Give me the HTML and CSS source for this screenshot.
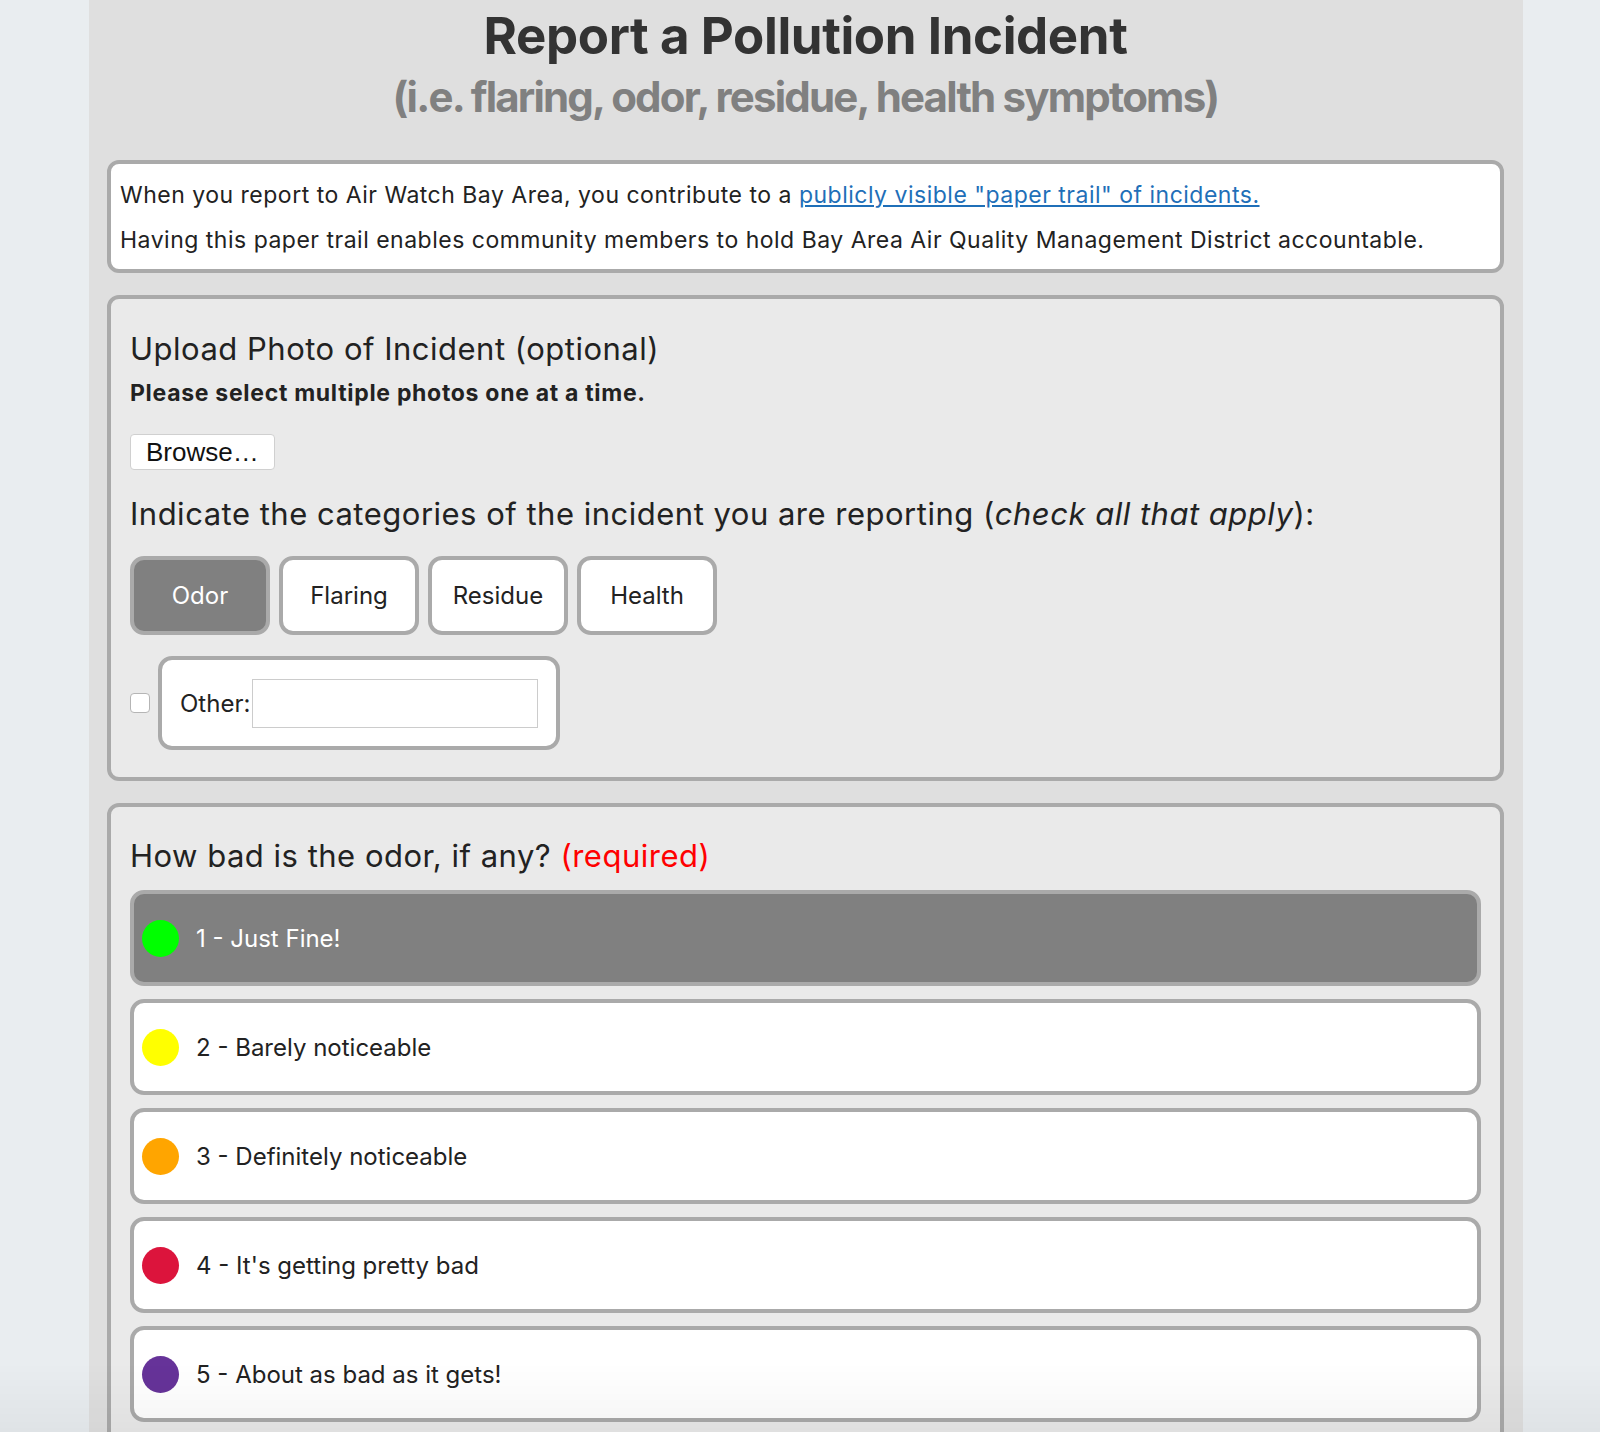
FILE: index.html
```html
<!DOCTYPE html>
<html lang="en">
<head>
    <meta charset="UTF-8">
    <meta name="viewport" content="width=device-width, initial-scale=1.0">
    <title>Report a Pollution Incident</title>
    <link rel="stylesheet" href="styles.css">
</head>
<body>
    <div id="report-page">
        <div class="page-header">
            <h1 class="page-title">Report a Pollution Incident</h1>
            <div class="page-subtitle">(i.e. flaring, odor, residue, health symptoms)</div>
        </div>

        <div class="info-box">
            <p>When you report to Air Watch Bay Area, you contribute to a <a href="#">publicly visible "paper trail" of incidents.</a></p>
            <p>Having this paper trail enables community members to hold Bay Area Air Quality Management District accountable.</p>
        </div>

        <div class="form-section">
            <h2 class="section-title">Upload Photo of Incident (optional)</h2>
            <div class="section-note">Please select multiple photos one at a time.</div>
            <button class="browse-btn">Browse…</button>

            <h2 class="section-title categories-title">Indicate the categories of the incident you are reporting (<em>check all that apply</em>):</h2>
            <div class="category-list">
                <button class="category-btn selected">Odor</button>
                <button class="category-btn">Flaring</button>
                <button class="category-btn">Residue</button>
                <button class="category-btn">Health</button>
            </div>
            <div class="other-row">
                <span class="checkbox"></span>
                <div class="other-box">
                    <label for="other-input">Other:</label>
                    <input type="text" id="other-input">
                </div>
            </div>
        </div>

        <div class="form-section odor-section">
            <h2 class="section-title">How bad is the odor, if any? <span class="required">(required)</span></h2>
            <div class="odor-list">
                <div class="odor-option selected"><span class="dot dot-1"></span>1 - Just Fine!</div>
                <div class="odor-option"><span class="dot dot-2"></span>2 - Barely noticeable</div>
                <div class="odor-option"><span class="dot dot-3"></span>3 - Definitely noticeable</div>
                <div class="odor-option"><span class="dot dot-4"></span>4 - It's getting pretty bad</div>
                <div class="odor-option"><span class="dot dot-5"></span>5 - About as bad as it gets!</div>
            </div>
        </div>
    </div>
    <div class="bottom-fade"></div>
</body>
</html>
```

FILE: styles.css
```css
body {
    margin: 0;
    padding: 0;
    background: #e9edf0;
    font-family: Inter, Roboto, sans-serif;
    color: #222;
    height: 1432px;
    overflow: hidden;
}

#report-page {
    width: 1434px;
    margin-left: 89px;
    min-height: 1432px;
    box-sizing: border-box;
    padding: 0 19px 0 18px;
    background: #dfdfdf;
}

.page-header {
    text-align: center;
    padding-top: 6px;
    margin-bottom: 38px;
}

.page-title {
    margin: 0;
    font-size: 51px;
    line-height: 60px;
    font-weight: bold;
    letter-spacing: -0.4px;
    color: #333;
}

.page-subtitle {
    margin-top: 6px;
    font-size: 42px;
    line-height: 50px;
    font-weight: bold;
    letter-spacing: -1.8px;
    color: #808080;
}

.info-box {
    background: #fff;
    border: 4px solid #aaa;
    border-radius: 12px;
    padding: 16px 9px 14px;
}

.info-box p {
    margin: 0;
    font-size: 23px;
    line-height: 30px;
    letter-spacing: 0.5px;
}

.info-box p + p {
    margin-top: 15px;
}

.info-box a {
    color: #1f6fb8;
}

.form-section {
    margin-top: 22px;
    background: #eaeaea;
    border: 4px solid #aaa;
    border-radius: 12px;
    padding: 32px 19px 27px;
}

.section-title {
    margin: 0;
    font-size: 31px;
    line-height: 36px;
    font-weight: normal;
    letter-spacing: 0.5px;
    color: #222;
}

.section-note {
    margin-top: 12px;
    font-size: 23px;
    line-height: 28px;
    font-weight: bold;
    letter-spacing: 0.7px;
}

.browse-btn {
    display: block;
    margin-top: 27px;
    height: 36px;
    padding: 0 15px;
    background: #fff;
    border: 1px solid #d0d0d0;
    border-radius: 4px;
    font-family: "Liberation Sans", Arial, sans-serif;
    font-size: 26px;
    color: #111;
}

.categories-title {
    margin-top: 26px;
}

.category-list {
    display: flex;
    gap: 9px;
    margin-top: 24px;
}

.category-btn {
    width: 140px;
    height: 79px;
    background: #fff;
    border: 4px solid #aaa;
    border-radius: 14px;
    font-family: Inter, Roboto, sans-serif;
    font-size: 24px;
    color: #222;
}

.category-btn.selected {
    background: #808080;
    color: #fff;
}

.other-row {
    display: flex;
    align-items: center;
    gap: 8px;
    margin-top: 21px;
}

.checkbox {
    width: 18px;
    height: 18px;
    border: 1px solid #b5b5b5;
    border-radius: 4px;
    background: #fff;
}

.other-box {
    display: flex;
    align-items: center;
    width: 402px;
    height: 94px;
    box-sizing: border-box;
    padding: 0 18px;
    background: #fff;
    border: 4px solid #aaa;
    border-radius: 14px;
    font-size: 24px;
}

.other-box label {
    margin-right: 2px;
}

.other-box input {
    width: 286px;
    height: 49px;
    box-sizing: border-box;
    border: 1px solid #ccc;
    font-size: 20px;
}

.odor-section {
    padding-top: 31px;
}

.odor-list {
    display: flex;
    flex-direction: column;
    gap: 13px;
    margin-top: 16px;
}

.odor-option {
    display: flex;
    align-items: center;
    height: 96px;
    box-sizing: border-box;
    padding: 0 8px;
    background: #fff;
    border: 4px solid #aaa;
    border-radius: 14px;
    font-size: 24px;
    color: #222;
}

.odor-option.selected {
    background: #808080;
    color: #fff;
}

.dot {
    width: 37px;
    height: 37px;
    border-radius: 50%;
    margin-right: 17px;
}

.dot-1 { background: #00ff00; }
.dot-2 { background: #ffff00; }
.dot-3 { background: #ffa500; }
.dot-4 { background: #dc143c; }
.dot-5 { background: #663399; }

.required {
    color: #ff0000;
}

.bottom-fade {
    position: fixed;
    left: 0;
    right: 0;
    bottom: 0;
    height: 70px;
    background: linear-gradient(to bottom, rgba(0, 0, 0, 0), rgba(0, 0, 0, 0.04));
    pointer-events: none;
}
```
